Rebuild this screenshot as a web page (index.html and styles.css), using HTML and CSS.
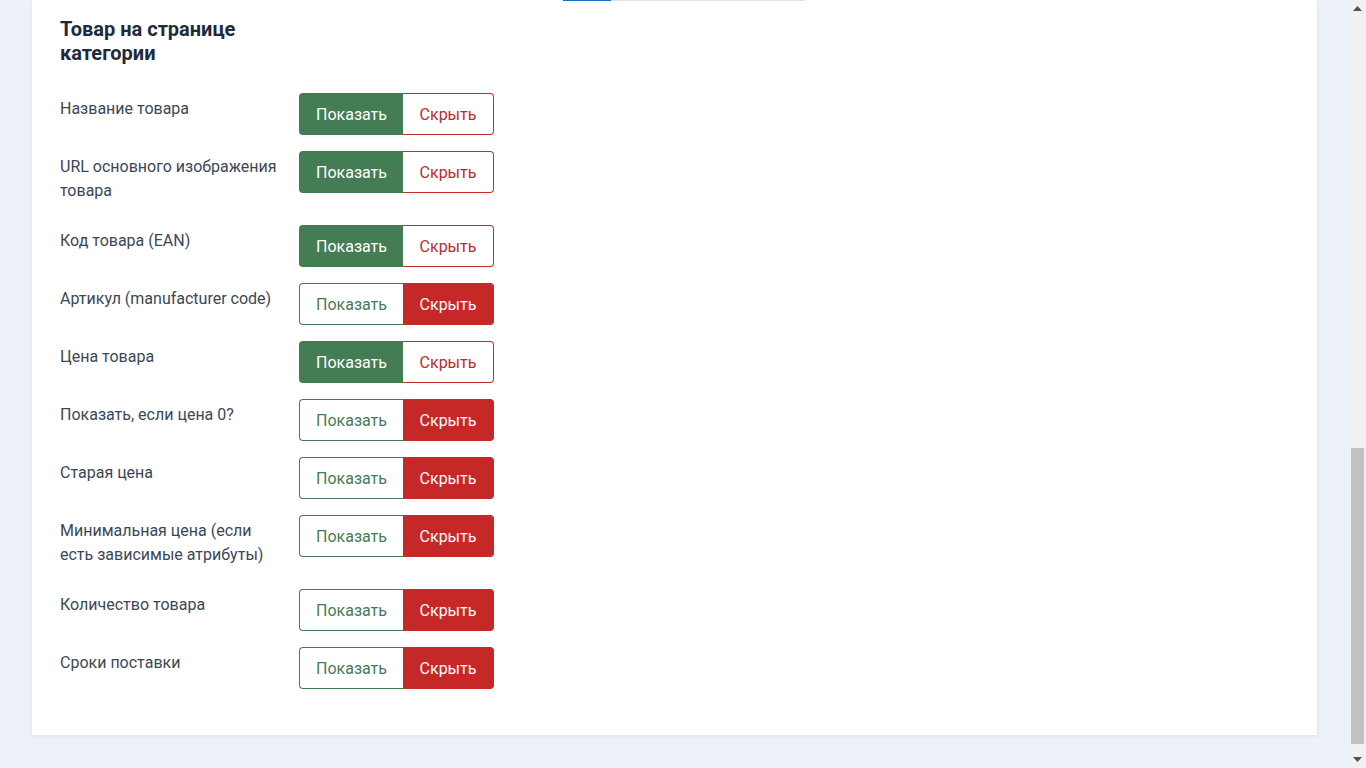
FILE: index.html
```html
<!DOCTYPE html>
<html lang="ru">
<head>
<meta charset="utf-8">
<title>Товар на странице категории</title>
<link rel="stylesheet" href="styles.css">
</head>
<body>
<div class="window">
  <div class="page">
    <main class="card">
      <div class="tabline"><span class="tab-active"></span><span class="tab-rest"></span></div>
      <h2 class="section-title">Товар на странице категории</h2>
      <div class="settings">
        <div class="label">Название товара</div>
        <div class="toggle"><button class="opt show on">Показать</button><button class="opt hide">Скрыть</button></div>

        <div class="label">URL основного изображения товара</div>
        <div class="toggle"><button class="opt show on">Показать</button><button class="opt hide">Скрыть</button></div>

        <div class="label">Код товара (EAN)</div>
        <div class="toggle"><button class="opt show on">Показать</button><button class="opt hide">Скрыть</button></div>

        <div class="label">Артикул (manufacturer code)</div>
        <div class="toggle"><button class="opt show">Показать</button><button class="opt hide on">Скрыть</button></div>

        <div class="label">Цена товара</div>
        <div class="toggle"><button class="opt show on">Показать</button><button class="opt hide">Скрыть</button></div>

        <div class="label">Показать, если цена 0?</div>
        <div class="toggle"><button class="opt show">Показать</button><button class="opt hide on">Скрыть</button></div>

        <div class="label">Старая цена</div>
        <div class="toggle"><button class="opt show">Показать</button><button class="opt hide on">Скрыть</button></div>

        <div class="label">Минимальная цена (если есть зависимые атрибуты)</div>
        <div class="toggle"><button class="opt show">Показать</button><button class="opt hide on">Скрыть</button></div>

        <div class="label">Количество товара</div>
        <div class="toggle"><button class="opt show">Показать</button><button class="opt hide on">Скрыть</button></div>

        <div class="label">Сроки поставки</div>
        <div class="toggle"><button class="opt show">Показать</button><button class="opt hide on">Скрыть</button></div>
      </div>
    </main>
  </div>
  <div class="scrollbar" aria-hidden="true">
    <div class="sb-btn"><svg width="9" height="5" viewBox="0 0 9 5"><path d="M0 5 L4.5 0 L9 5 Z" fill="#505050"/></svg></div>
    <div class="sb-track"><div class="sb-thumb"></div></div>
    <div class="sb-btn"><svg width="9" height="5" viewBox="0 0 9 5"><path d="M0 0 L4.5 5 L9 0 Z" fill="#505050"/></svg></div>
  </div>
</div>
</body>
</html>
```
FILE: styles.css
```css
html, body {
  margin: 0;
  height: 100%;
  overflow: hidden;
}
body {
  background: #edf1f8;
  font-family: Roboto, "Liberation Sans", Arial, sans-serif;
  color: #3b4757;
}
.window {
  display: flex;
  height: 100vh;
}
.page {
  flex: 1;
  min-width: 0;
}
.card {
  margin: 0 32px 33px;
  background: #fff;
  box-shadow: 0 1px 4px rgba(40, 60, 100, 0.08);
  padding: 0 28px 46px;
}
.tabline {
  display: flex;
  height: 1px;
  margin-left: 503px;
}
.tab-active {
  width: 48px;
  background: #1a6fc4;
}
.tab-rest {
  width: 194px;
  background: #dfe2e6;
}
.section-title {
  margin: 16px 0 28px;
  width: 224px;
  font-size: 20px;
  line-height: 24px;
  font-weight: 700;
  color: #1e2b3c;
}
.settings {
  display: grid;
  grid-template-columns: 239px auto;
  row-gap: 16px;
  justify-content: start;
  align-items: start;
}
.label {
  width: 224px;
  padding: 4px 0 6px;
  font-size: 16px;
  line-height: 24px;
  color: #3b4757;
}
.toggle {
  display: flex;
}
.opt {
  height: 42px;
  margin: 0;
  padding: 0;
  background: #fff;
  font-family: Roboto, "Liberation Sans", Arial, sans-serif;
  font-size: 16px;
  font-weight: 400;
  cursor: pointer;
}
.opt.show {
  width: 104px;
  border: 1px solid #457c55;
  border-right: 0;
  border-radius: 4px 0 0 4px;
  color: #457c55;
}
.opt.hide {
  width: 91px;
  border: 1px solid #c8292b;
  border-left: 0;
  border-radius: 0 4px 4px 0;
  color: #c02a2a;
}
.opt.show.on {
  background: #447d54;
  color: #fff;
}
.opt.hide.on {
  background: #c62828;
  color: #fff;
}
.scrollbar {
  flex: none;
  width: 17px;
  display: flex;
  flex-direction: column;
  background: #f1f1f1;
}
.sb-btn {
  flex: none;
  height: 17px;
  display: flex;
  align-items: center;
  justify-content: center;
}
.sb-track {
  flex: 1;
  display: flex;
  flex-direction: column;
  justify-content: flex-end;
  padding: 0 2px 7px;
}
.sb-thumb {
  height: 296px;
  background: #c1c1c1;
}
```
